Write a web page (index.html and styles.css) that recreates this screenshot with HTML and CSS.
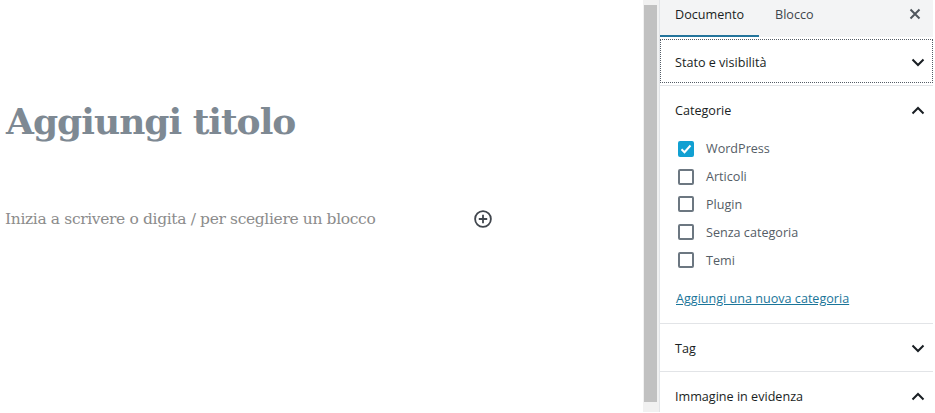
FILE: index.html
```html
<!DOCTYPE html>
<html lang="it">
<head>
    <meta charset="UTF-8">
    <title>Modifica articolo</title>
    <link rel="stylesheet" href="styles.css">
</head>
<body>
    <div class="editor">
        <div class="content">
            <h1 class="post-title">Aggiungi titolo</h1>
            <div class="block-row">
                <p class="placeholder">Inizia a scrivere o digita / per scegliere un blocco</p>
                <svg class="add-block" width="20" height="20" viewBox="0 0 20 20">
                    <circle cx="10" cy="10" r="7.9" fill="none" stroke="#40464d" stroke-width="1.8"/>
                    <path d="M10 5.8v8.4M5.8 10h8.4" fill="none" stroke="#40464d" stroke-width="1.8"/>
                </svg>
            </div>
        </div>
        <div class="scrollbar"><div class="thumb"></div></div>
        <aside class="sidebar">
            <div class="tabs">
                <div class="tab active">Documento</div>
                <div class="tab">Blocco</div>
                <svg class="close" width="12" height="12" viewBox="0 0 12 12">
                    <path d="M1.5 1.5l9 9M10.5 1.5l-9 9" fill="none" stroke="#50575e" stroke-width="2"/>
                </svg>
            </div>

            <div class="panel-head focused">
                <span>Stato e visibilità</span>
                <svg class="chev" width="14" height="9" viewBox="0 0 14 9"><path d="M1.5 1.5L7 7l5.5-5.5" fill="none" stroke="#191e23" stroke-width="2"/></svg>
            </div>

            <div class="panel">
                <div class="panel-head">
                    <span>Categorie</span>
                    <svg class="chev" width="14" height="9" viewBox="0 0 14 9"><path d="M1.5 7.5L7 2l5.5 5.5" fill="none" stroke="#191e23" stroke-width="2"/></svg>
                </div>
                <ul class="cats">
                    <li><span class="check on"><svg width="12" height="10" viewBox="0 0 12 10"><path d="M1.5 5.2l3 3L10.5 1.5" fill="none" stroke="#fff" stroke-width="2"/></svg></span>WordPress</li>
                    <li><span class="check"></span>Articoli</li>
                    <li><span class="check"></span>Plugin</li>
                    <li><span class="check"></span>Senza categoria</li>
                    <li><span class="check"></span>Temi</li>
                </ul>
                <a class="add-cat" href="#">Aggiungi una nuova categoria</a>
            </div>

            <div class="panel">
                <div class="panel-head">
                    <span>Tag</span>
                    <svg class="chev" width="14" height="9" viewBox="0 0 14 9"><path d="M1.5 1.5L7 7l5.5-5.5" fill="none" stroke="#191e23" stroke-width="2"/></svg>
                </div>
            </div>

            <div class="panel">
                <div class="panel-head">
                    <span>Immagine in evidenza</span>
                    <svg class="chev" width="14" height="9" viewBox="0 0 14 9"><path d="M1.5 7.5L7 2l5.5 5.5" fill="none" stroke="#191e23" stroke-width="2"/></svg>
                </div>
            </div>
        </aside>
    </div>
</body>
</html>
```

FILE: styles.css
```css
html, body {
    margin: 0;
    height: 100%;
    overflow: hidden;
    background: #fff;
}
.editor {
    display: flex;
    height: 412px;
}
.content {
    width: 643px;
    flex: none;
    padding: 92px 0 0 6px;
    box-sizing: border-box;
    font-family: "DejaVu Serif", serif;
}
.post-title {
    margin: 0;
    font-size: 36px;
    line-height: 58px;
    font-weight: 700;
    color: #7e8993;
    letter-spacing: -1px;
}
.block-row {
    display: flex;
    align-items: center;
    margin-top: 45px;
    height: 47px;
}
.placeholder {
    margin: 0 0 0 -1px;
    width: 468px;
    font-size: 15.5px;
    color: #8c8c8c;
    letter-spacing: -0.36px;
}
.scrollbar {
    width: 16px;
    flex: none;
    background: #f1f1f1;
    padding-top: 5px;
    box-sizing: border-box;
}
.thumb {
    width: 13px;
    height: 397px;
    margin-left: 1px;
    background: #c1c1c1;
}
.sidebar {
    width: 274px;
    flex: none;
    border-left: 1px solid #e2e4e7;
    box-sizing: border-box;
    font-family: "Open Sans", sans-serif;
    font-size: 12.6px;
    color: #191e23;
}
.tabs {
    display: flex;
    align-items: flex-start;
    height: 37px;
    background: #f3f4f5;
}
.tab {
    height: 35px;
    line-height: 29px;
    padding: 0 15px 0 16px;
    color: #40464d;
}
.tab.active {
    width: 69px;
    padding: 0 15px;
    color: #191e23;
    border-bottom: 2px solid #23749b;
}
.close {
    margin: 8px 12px 0 auto;
}
.panel-head {
    display: flex;
    align-items: center;
    justify-content: space-between;
    padding: 2px 8px 0 15px;
    box-sizing: border-box;
}
.focused {
    height: 44px;
    margin: 2px 0;
    outline: 1px dotted #555d66;
    outline-offset: -1px;
}
.panel {
    border-top: 1px solid #e2e4e7;
}
.panel > .panel-head {
    height: 47px;
}
.cats {
    list-style: none;
    margin: 0;
    padding: 2px 0 0 18px;
    color: #555d66;
}
.cats li {
    display: flex;
    align-items: center;
    height: 27.8px;
}
.check {
    display: flex;
    align-items: center;
    justify-content: center;
    width: 16px;
    height: 16px;
    margin-right: 12px;
    border: 2px solid #6c7781;
    border-radius: 2px;
    box-sizing: border-box;
}
.check.on {
    background: #11a0d2;
    border-color: #11a0d2;
}
.add-cat {
    display: block;
    margin: 16px 0 16px 16px;
    line-height: 17px;
    color: #1a7599;
}
```
